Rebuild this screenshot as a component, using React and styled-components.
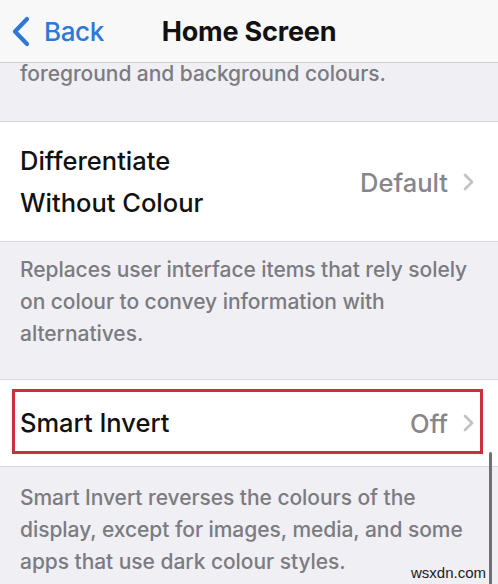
import React from 'react';
import styled, { createGlobalStyle } from 'styled-components';

const Global = createGlobalStyle`
  html, body { margin: 0; padding: 0; }
  body {
    width: 498px;
    height: 584px;
    overflow: hidden;
    background: #efeff4;
    font-family: Inter, "Noto Sans", sans-serif;
    -webkit-font-smoothing: antialiased;
  }
`;

const Screen = styled.div`
  position: relative;
  width: 498px;
  height: 584px;
  overflow: hidden;
  background: #efeff4;
`;

const NavBar = styled.header`
  height: 62px;
  display: flex;
  align-items: center;
  position: relative;
  background: #f8f8f9;
  border-bottom: 1px solid #cfcfd3;
`;

const BackButton = styled.div`
  display: flex;
  align-items: center;
  gap: 13px;
  padding-left: 11px;
  color: #2d79d3;
  font-size: 26px;
  font-weight: 500;
  letter-spacing: -0.4px;
`;

const Title = styled.h1`
  position: absolute;
  left: 0;
  right: 0;
  margin: 0;
  text-align: center;
  font-size: 27px;
  font-weight: 700;
  color: #111;
  letter-spacing: -0.2px;
  pointer-events: none;
`;

const Footer = styled.p`
  margin: 0;
  padding: ${p => p.$top}px 12px ${p => p.$bottom}px 20px;
  color: #7b7b80;
  font-size: 21px;
  font-weight: 450;
  line-height: ${p => p.$lh || 32}px;
  letter-spacing: -0.05px;
`;

const Cell = styled.div`
  position: relative;
  display: flex;
  align-items: center;
  justify-content: space-between;
  background: #fff;
  border-top: 1px solid #d8d8dc;
  border-bottom: 1px solid #d8d8dc;
  padding: ${p => p.$pad};
`;

const Label = styled.div`
  color: #111;
  font-size: 25.5px;
  font-weight: 500;
  line-height: 42px;
  letter-spacing: 0;
`;

const Accessory = styled.div`
  display: flex;
  align-items: center;
  gap: 14px;
  padding-right: 23px;
  color: #86868b;
  font-size: 25.5px;
  font-weight: 500;
  letter-spacing: 0;
`;

const Highlight = styled.div`
  position: absolute;
  left: 12px;
  right: 15px;
  top: 9px;
  bottom: 12px;
  border: 3px solid #c8323c;
  pointer-events: none;
`;

const ScrollBar = styled.div`
  position: absolute;
  left: 489px;
  top: 452px;
  width: 3px;
  height: 140px;
  border-radius: 2px;
  background: #707074;
`;

const Watermark = styled.div`
  position: absolute;
  right: 12px;
  bottom: 3px;
  font-family: "Liberation Sans", Arial, sans-serif;
  font-size: 15px;
  line-height: 16px;
  color: #1a1a1a;
`;

const BackChevron = () => (
  <svg width="20" height="31" viewBox="0 0 20 31">
    <path d="M16 3 L4 15.5 L16 28" fill="none" stroke="#2d79d3" strokeWidth="4.2" strokeLinecap="round" strokeLinejoin="round" />
  </svg>
);

const Disclosure = () => (
  <svg width="13" height="18" viewBox="0 0 13 18">
    <path d="M3 2 L10 9 L3 16" fill="none" stroke="#c3c3c7" strokeWidth="2.8" strokeLinecap="round" strokeLinejoin="round" />
  </svg>
);

export default function App() {
  return (
    <Screen>
      <Global />
      <NavBar>
        <BackButton>
          <BackChevron />
          <span>Back</span>
        </BackButton>
        <Title>Home Screen</Title>
      </NavBar>

      <Footer $top={1} $bottom={37} $lh={20}>foreground and background colours.</Footer>

      <Cell $pad="18px 0 17px 20px">
        <Label>Differentiate<br />Without Colour</Label>
        <Accessory>Default<Disclosure /></Accessory>
      </Cell>
      <Footer $top={12} $bottom={29}>
        Replaces user interface items that rely solely on colour to convey information with alternatives.
      </Footer>

      <Cell $pad="22px 0 22px 20px">
        <Label>Smart Invert</Label>
        <Accessory>Off<Disclosure /></Accessory>
        <Highlight />
      </Cell>
      <Footer $top={15} $bottom={0}>
        Smart Invert reverses the colours of the display, except for images, media, and some apps that use dark colour styles.
      </Footer>

      <ScrollBar />
      <Watermark>wsxdn.com</Watermark>
    </Screen>
  );
}
